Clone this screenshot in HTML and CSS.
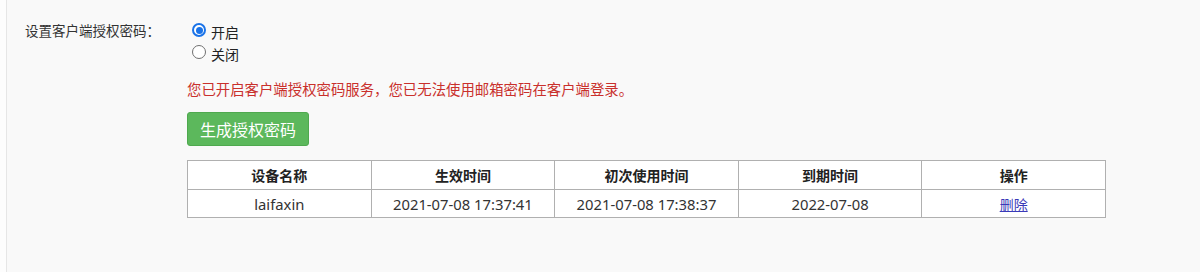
FILE: index.html
```html
<!DOCTYPE html>
<html lang="zh-CN">
<head>
<meta charset="utf-8">
<title>客户端授权密码</title>
<link rel="stylesheet" href="styles.css">
</head>
<body>
<div class="page">
  <div class="setting">
    <div class="label">设置客户端授权密码：</div>
    <div class="content">
      <div class="radios">
        <label class="radio"><span class="dot on"></span><span>开启</span></label>
        <label class="radio"><span class="dot"></span><span>关闭</span></label>
      </div>
      <p class="notice">您已开启客户端授权密码服务，您已无法使用邮箱密码在客户端登录。</p>
      <button class="btn" type="button">生成授权密码</button>
      <table class="devices">
        <thead>
          <tr><th>设备名称</th><th>生效时间</th><th>初次使用时间</th><th>到期时间</th><th>操作</th></tr>
        </thead>
        <tbody>
          <tr><td>laifaxin</td><td>2021-07-08 17:37:41</td><td>2021-07-08 17:38:37</td><td>2022-07-08</td><td><a href="#" class="del">删除</a></td></tr>
        </tbody>
      </table>
    </div>
  </div>
</div>
</body>
</html>
```

FILE: styles.css
```css
html, body {
  margin: 0;
  padding: 0;
  background: #fdfdfd;
}
body {
  font-family: "Noto Sans", "Noto Sans CJK SC", sans-serif;
  font-size: 14px;
  color: #333;
}
.page {
  margin-left: 6px;
  border-left: 1px solid #e6e6e6;
  background: #f9f9f9;
  height: 272px;
  box-sizing: border-box;
  padding: 19px 0 0 18px;
}
.setting {
  display: flex;
}
.label {
  width: 162px;
  flex: none;
  line-height: 22px;
  color: #333;
  font-family: "Noto Sans CJK SC", sans-serif;
  font-size: 13.5px;
}
.content {
  display: flex;
  flex-direction: column;
  align-items: flex-start;
}
.radios {
  display: flex;
  flex-direction: column;
  padding-left: 5px;
}
.radio {
  display: flex;
  align-items: center;
  height: 22px;
  gap: 5px;
  font-family: "Noto Sans CJK SC", sans-serif;
  font-size: 14px;
  color: #222;
}
.radio span:last-child {
  padding-top: 3px;
}
.dot {
  width: 14px;
  height: 14px;
  box-sizing: border-box;
  border-radius: 50%;
  border: 1px solid #707070;
  background: #fff;
  position: relative;
}
.dot.on {
  border: 2px solid #1a73e8;
  background: #fff;
}
.dot.on::after {
  content: "";
  position: absolute;
  left: 1.5px;
  top: 1.5px;
  width: 7px;
  height: 7px;
  border-radius: 50%;
  background: #1a73e8;
}
.notice {
  margin: 16px 0 0 0;
  line-height: 20px;
  color: #c9302c;
  font-family: "Noto Sans CJK SC", sans-serif;
  font-size: 14.4px;
}
.btn {
  margin-top: 13px;
  width: 122px;
  height: 34px;
  border: 1px solid #4fa94f;
  border-radius: 3px;
  background: #5cb85c;
  color: #fff;
  font-family: "Noto Sans CJK SC", sans-serif;
  font-size: 16px;
  padding: 0;
}
.devices {
  margin-top: 14px;
  width: 919px;
  border-collapse: collapse;
  table-layout: fixed;
  background: #fff;
}
.devices th, .devices td {
  border: 1px solid #b0b0b0;
  text-align: center;
  padding: 0;
}
.devices th {
  height: 28px;
  font-family: "Noto Sans CJK SC", sans-serif;
  font-size: 14px;
  font-weight: bold;
  color: #222;
}
.devices td {
  height: 27px;
  font-size: 14.8px;
  color: #333;
}
.del {
  color: #3a3ab8;
  text-decoration: underline;
  font-family: "Noto Sans CJK SC", sans-serif;
  font-size: 14px;
}
```
